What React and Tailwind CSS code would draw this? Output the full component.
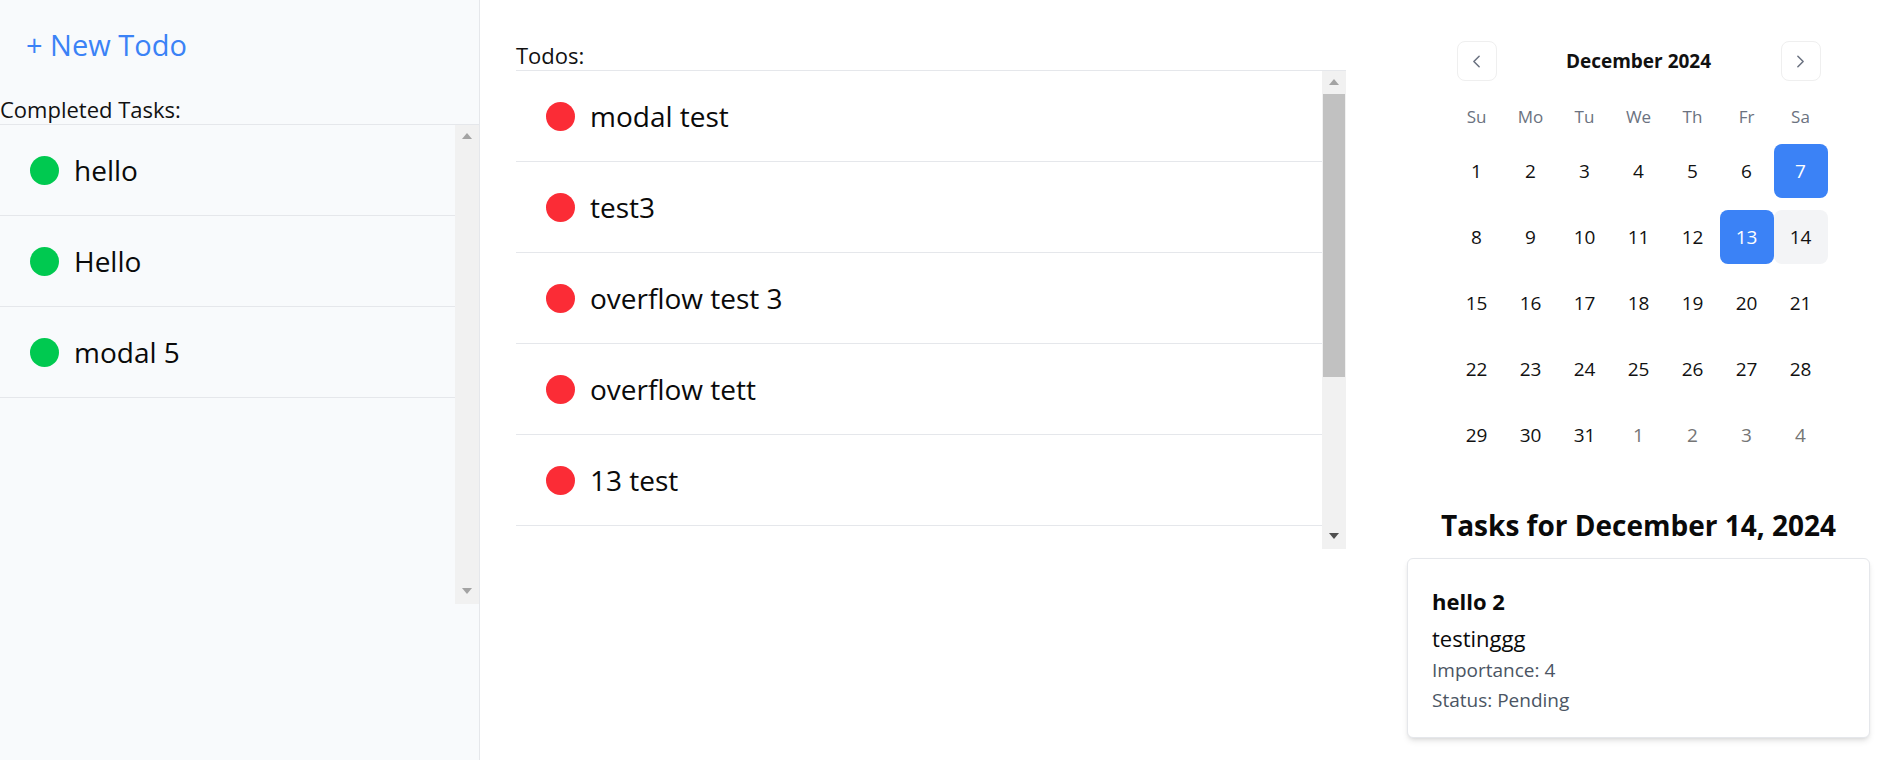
import { ChevronLeft, ChevronRight } from 'lucide-react';

const completedTasks = ['hello', 'Hello', 'modal 5'];
const todos = ['modal test', 'test3', 'overflow test 3', 'overflow tett', '13 test'];
const weekdays = ['Su', 'Mo', 'Tu', 'We', 'Th', 'Fr', 'Sa'];

const weeks = [
  [1, 2, 3, 4, 5, 6, 7],
  [8, 9, 10, 11, 12, 13, 14],
  [15, 16, 17, 18, 19, 20, 21],
  [22, 23, 24, 25, 26, 27, 28],
  [29, 30, 31, 1, 2, 3, 4],
];

// fake classic scrollbar so it looks like the windows one in the screenshot
const ScrollTrack = ({ thumb, active }) => (
  <div className="flex flex-col w-[24px] shrink-0 bg-[#f1f1f1]">
    <div className="h-[22px] flex items-center justify-center">
      <svg width="10" height="6" viewBox="0 0 10 6">
        <polygon points="5,0 10,6 0,6" fill="#a3a3a3" />
      </svg>
    </div>
    <div className="flex-1 px-[1px] pt-[1px]">
      {thumb && <div className="h-[283px] bg-[#c1c1c1]" />}
    </div>
    <div className="h-[26px] flex items-center justify-center">
      <svg width="10" height="6" viewBox="0 0 10 6">
        <polygon points="0,0 10,0 5,6" fill={active ? '#505050' : '#a3a3a3'} />
      </svg>
    </div>
  </div>
);

const TaskRow = ({ title, done }) => (
  <div className="h-[91px] flex items-center gap-[15px] pl-[30px] border-b border-[#e5e7eb]">
    <span className={`w-[29px] h-[29px] rounded-full shrink-0 ${done ? 'bg-[#00c950]' : 'bg-[#fb2c36]'}`} />
    <span className="text-[28px] text-[#0a0a0a] leading-none">{title}</span>
  </div>
);

const Calendar = () => (
  <div className="w-[378px] mx-auto">
    <div className="flex items-center justify-between px-[7px]">
      <button className="w-[40px] h-[40px] rounded-lg border border-[#efefef] flex items-center justify-center text-[#6b7280]">
        <ChevronLeft className="w-[21px] h-[21px]" strokeWidth={1.75} />
      </button>
      <span className="text-[19px] font-bold text-[#111]">December 2024</span>
      <button className="w-[40px] h-[40px] rounded-lg border border-[#efefef] flex items-center justify-center text-[#6b7280]">
        <ChevronRight className="w-[21px] h-[21px]" strokeWidth={1.75} />
      </button>
    </div>
    <div className="grid grid-cols-7 mt-[21px] h-[30px] items-center">
      {weekdays.map((d) => (
        <span key={d} className="text-center text-[17px] text-[#6b7280]">{d}</span>
      ))}
    </div>
    <div className="flex flex-col gap-[12px] mt-[12px]">
      {weeks.map((week, wi) => (
        <div key={wi} className="grid grid-cols-7">
          {week.map((day, di) => {
            const outside = wi === 4 && di > 2;
            const blue = !outside && (day === 7 || day === 13);
            const selected = !outside && day === 14;
            return (
              <div
                key={di}
                className={`h-[54px] flex items-center justify-center rounded-lg text-[19px] ${
                  blue ? 'bg-[#3b82f6] text-white' : selected ? 'bg-[#f3f4f6] text-[#111]' : outside ? 'text-[#757575]' : 'text-[#111]'
                }`}
              >
                {day}
              </div>
            );
          })}
        </div>
      ))}
    </div>
  </div>
);

export default function App() {
  return (
    <div className="flex h-[760px] w-full bg-white font-['Open_Sans',sans-serif] overflow-hidden">
      {/* sidebar */}
      <aside className="w-[480px] shrink-0 bg-[#f8fafc] border-r border-[#e5e7eb] flex flex-col">
        <button className="self-start ml-[26px] mt-[23px] h-[42px] text-[29px] leading-none text-[#3b82f6]">
          + New Todo
        </button>
        <div className="mt-[29px] h-[30px] text-[22px] leading-[30px] text-[#111]">Completed Tasks:</div>
        <div className="flex h-[480px] border-t border-[#e5e7eb]">
          <div className="flex-1">
            {completedTasks.map((t) => (
              <TaskRow key={t} title={t} done />
            ))}
          </div>
          <ScrollTrack />
        </div>
      </aside>

      {/* todos */}
      <main className="w-[830px] ml-[36px] shrink-0 pt-[40px]">
        <div className="h-[30px] text-[22px] leading-[30px] text-[#111]">Todos:</div>
        <div className="flex h-[479px] border-t border-[#e5e7eb]">
          <div className="flex-1 overflow-hidden">
            {todos.map((t) => (
              <TaskRow key={t} title={t} />
            ))}
          </div>
          <ScrollTrack thumb active />
        </div>
      </main>

      {/* calendar + tasks */}
      <section className="w-[463px] ml-[61px] shrink-0 pt-[41px]">
        <Calendar />
        <h2 className="mt-[43px] text-center text-[28px] font-bold leading-[40px] text-[#0a0a0a]">
          Tasks for December 14, 2024
        </h2>
        <div className="mt-[13px] h-[180px] rounded-md border border-[#e5e7eb] shadow-md bg-white px-[24px] pt-[26px]">
          <div className="text-[22px] font-bold leading-[32px] text-[#0a0a0a]">hello 2</div>
          <div className="mt-[4px] text-[22px] leading-[34px] text-[#0a0a0a]">testinggg</div>
          <div className="text-[19px] leading-[30px] text-[#4b5563]">Importance: 4</div>
          <div className="text-[19px] leading-[30px] text-[#4b5563]">Status: Pending</div>
        </div>
      </section>
    </div>
  );
}
